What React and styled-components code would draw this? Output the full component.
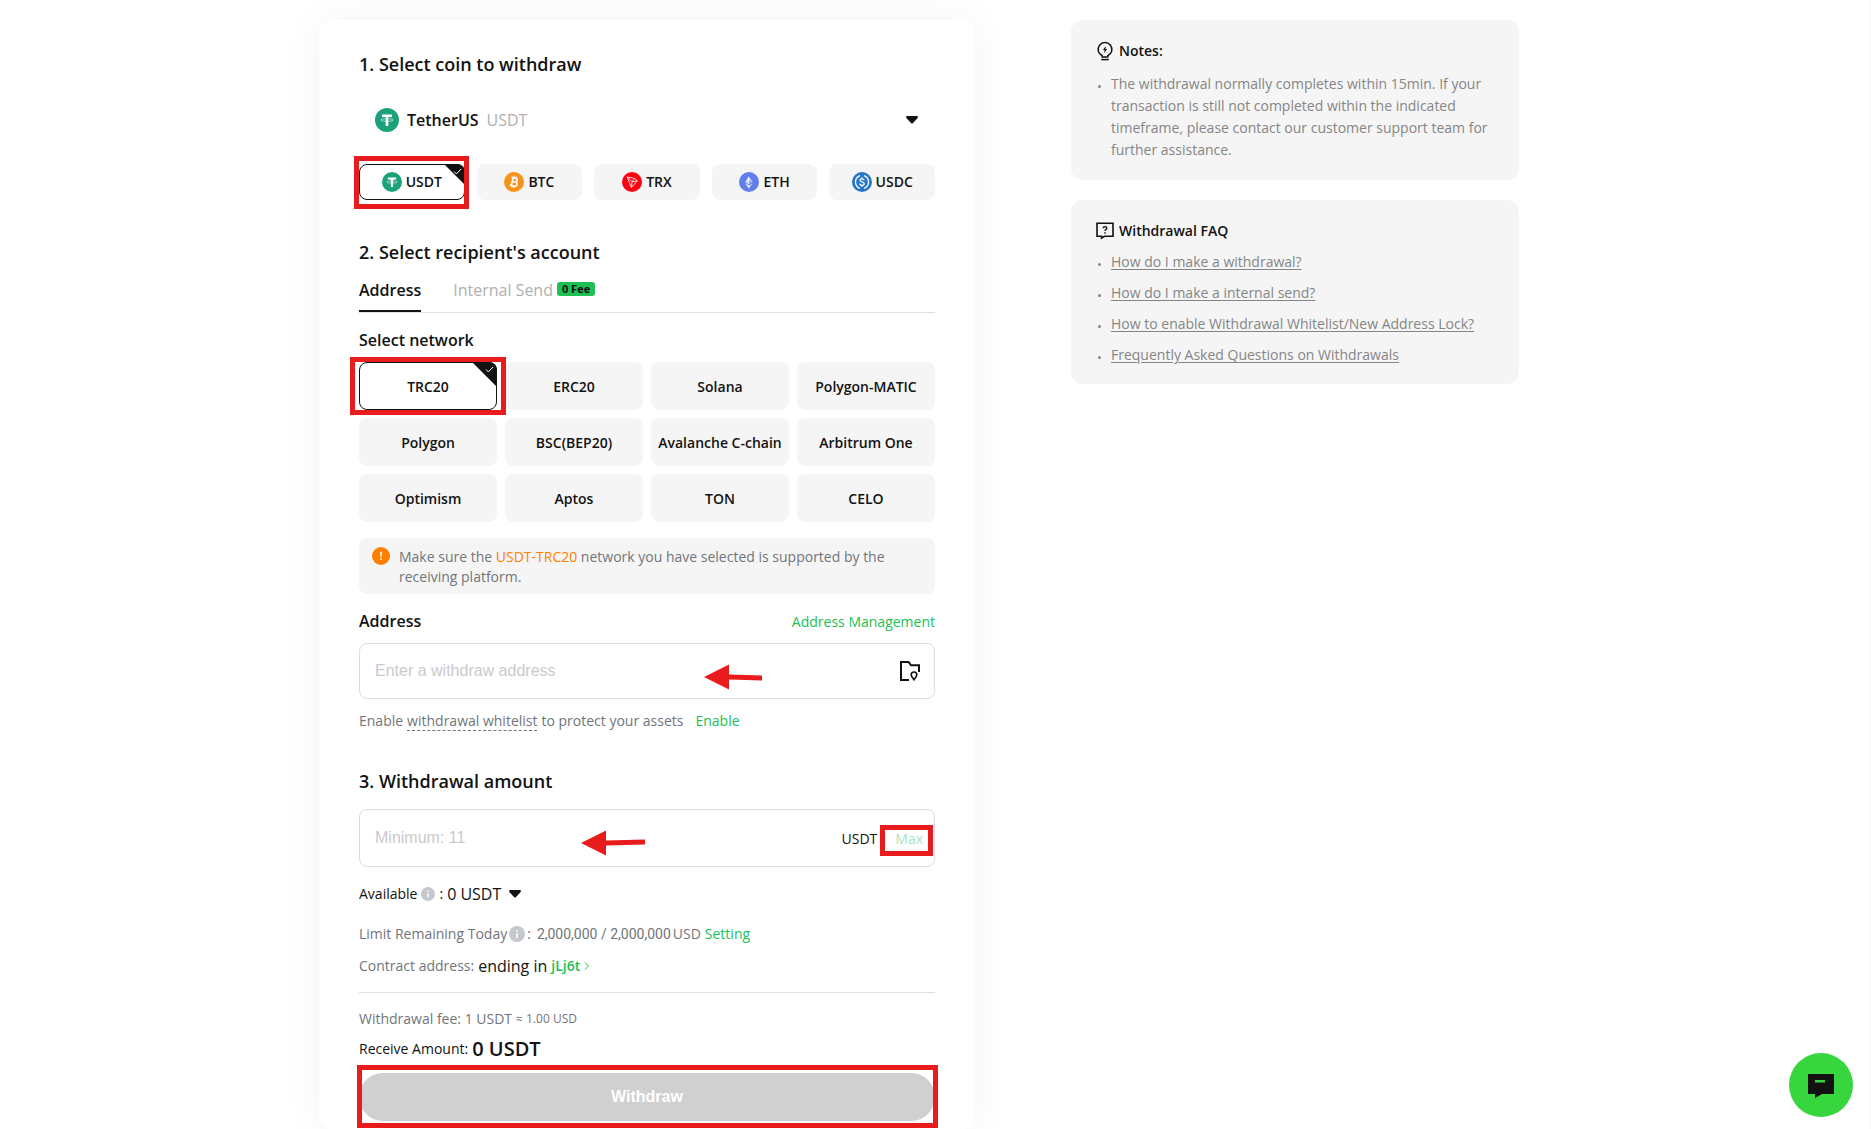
import React, { useState } from 'react';
import styled, { createGlobalStyle } from 'styled-components';

const GlobalStyle = createGlobalStyle`
  * {
    box-sizing: border-box;
  }

  body {
    margin: 0;
    background: #fff;
    color: #121212;
    font-family: "Open Sans", sans-serif;
    font-size: 14px;
  }

  button, input, select {
    font-family: inherit;
    margin: 0;
    padding: 0;
    border: 0;
    background: none;
    color: inherit;
  }

  button {
    cursor: pointer;
  }
`;

const Page = styled.div`
  border-right: 2px solid #fafafa;
  padding: 20px 31px 0 0;
`;

const Layout = styled.main`
  display: flex;
  gap: 96px;
  align-items: flex-start;
  max-width: 1200px;
  margin: 0 auto;
`;

const Card = styled.form`
  flex: 1;
  padding: 32px 40px 8px;
  border-radius: 12px;
  background: #fff;
  box-shadow: 0 0 40px rgba(0, 0, 0, 0.05);
`;

const Sidebar = styled.aside`
  flex: 0 0 448px;
  display: flex;
  flex-direction: column;
  gap: 20px;
`;

const Title = styled.h2`
  margin: ${({ $top }) => $top || 0}px 0 16px;
  font-size: 18px;
  line-height: 24px;
  font-weight: 600;
`;

const SubTitle = styled.div`
  font-size: 16px;
  line-height: 24px;
  font-weight: 600;
`;

const CoinPicker = styled.div`
  display: flex;
  align-items: center;
  height: 56px;
  padding: 0 17px 0 16px;
  gap: 8px;
`;

const CoinSelect = styled.select`
  appearance: none;
  field-sizing: content;
  font-size: 16px;
  line-height: 24px;
  font-weight: 600;
`;

const CoinCode = styled.span`
  flex: 1;
  font-size: 16px;
  line-height: 24px;
  color: #b0b0b0;
`;

const CoinRow = styled.div`
  display: grid;
  grid-template-columns: repeat(5, 1fr);
  gap: 12px;
  margin-top: 16px;
`;

const NetworkGrid = styled.div`
  display: grid;
  grid-template-columns: repeat(4, 1fr);
  gap: 8px;
  margin-top: 10px;
`;

const Option = styled.button`
  position: relative;
  display: flex;
  align-items: center;
  justify-content: center;
  gap: 4px;
  height: ${({ $tall }) => ($tall ? 48 : 36)}px;
  padding-top: ${({ $tall }) => ($tall ? 2 : 0)}px;
  border: 1px solid ${({ $active }) => ($active ? '#121212' : '#f5f5f5')};
  border-radius: 8px;
  background: ${({ $active }) => ($active ? '#fff' : '#f5f5f5')};
  font-size: 14px;
  line-height: 20px;
  font-weight: 600;
  white-space: nowrap;
`;

const Corner = styled.svg`
  position: absolute;
  top: -1px;
  right: -1px;
`;

const Highlight = styled.span`
  position: absolute;
  z-index: 1;
  inset: ${({ $inset }) => $inset};
  border: 5px solid #e81c1c;
  pointer-events: none;
`;

const Tabs = styled.div`
  display: flex;
  gap: 32px;
  height: 45px;
  margin-top: -12px;
  margin-bottom: 15px;
  border-bottom: 1px solid #d8dfe6;
`;

const Tab = styled.button`
  display: flex;
  align-items: center;
  gap: 4px;
  border-top: 2px solid transparent;
  border-bottom: 2px solid ${({ $active }) => ($active ? '#121212' : 'transparent')};
  font-size: 16px;
  font-weight: ${({ $active }) => ($active ? 600 : 400)};
  color: ${({ $active }) => ($active ? '#121212' : '#b0b0b0')};
`;

const Badge = styled.span`
  margin-bottom: 2px;
  padding: 0 5px;
  border-radius: 3px;
  background: #1dc052;
  color: #121212;
  font-size: 11px;
  line-height: 14px;
  font-weight: 700;
`;

const Notice = styled.div`
  display: flex;
  gap: 9px;
  margin: 16px 0 15px;
  padding: 9px 13px 7px;
  border-radius: 8px;
  background: #f5f5f5;
  color: #71757a;
  line-height: 20px;

  svg {
    flex: none;
  }

  p {
    margin: 0;
  }

  b {
    font-weight: 400;
    color: #ff7f00;
  }
`;

const Between = styled.div`
  display: flex;
  justify-content: space-between;
  align-items: center;
`;

const Green = styled.a`
  margin-left: ${({ $left }) => $left || 0}px;
  color: #20bf55;
  text-decoration: none;
  font-weight: ${({ $strong }) => ($strong ? 600 : 400)};
`;

const Field = styled.div`
  position: relative;
  display: flex;
  align-items: center;
  height: ${({ $height }) => $height}px;
  margin-top: ${({ $top }) => $top || 0}px;
  padding: 0 ${({ $end }) => $end}px 0 15px;
  border: 1px solid #dadde8;
  border-radius: 8px;
`;

const FieldInput = styled.input`
  flex: 1;
  min-width: 0;
  height: 32px;
  outline: none;
  font-family: "Liberation Sans", sans-serif;
  font-size: 16px;

  &::placeholder {
    color: #c9cacc;
  }
`;

const IconButton = styled.button`
  display: flex;
  margin-left: ${({ $left }) => $left || 0}px;
`;

const Arrow = styled.svg`
  position: absolute;
  top: 20px;
  right: ${({ $right }) => $right}px;
  pointer-events: none;
`;

const MaxButton = styled.button`
  position: relative;
  margin: 2px 0 0 18px;
  color: #a5e6bb;
  font-size: 14px;
  line-height: 20px;
`;

const Line = styled.div`
  display: flex;
  align-items: center;
  gap: ${({ $gap }) => $gap || 4}px;
  margin-top: ${({ $top }) => $top || 0}px;
  line-height: ${({ $height }) => $height || 24}px;
  color: ${({ $dark }) => ($dark ? '#121212' : '#71757a')};
`;

const Whitelist = styled.span`
  line-height: 18px;
  border-bottom: 1px dashed #71757a;
`;

const Value = styled.span`
  font-size: 16px;
  color: #121212;
`;

const Total = styled.span`
  font-size: 20px;
  font-weight: 600;
`;

const Digits = styled.span`
  margin-left: 4px;
  font-family: Roboto, sans-serif;
`;

const Approx = styled.span`
  font-size: 12px;
`;

const Divider = styled.hr`
  height: 1px;
  margin: 14px 0 16px;
  border: 0;
  background: #d8dfe6;
`;

const Submit = styled.button`
  position: relative;
  display: block;
  width: 100%;
  height: 48px;
  margin-top: 12px;
  border-radius: 24px;
  background: #d0d0d0;
  color: #fff;
  font-family: "Liberation Sans", sans-serif;
  font-size: 16px;
  font-weight: 700;
`;

const Panel = styled.section`
  padding: 19px 24px ${({ $bottom }) => $bottom}px;
  border-radius: 12px;
  background: #f5f5f5;
`;

const PanelTitle = styled.h3`
  display: flex;
  align-items: center;
  gap: 4px;
  margin: 0;
  font-size: 14px;
  line-height: 24px;
  font-weight: 600;
`;

const PanelList = styled.ul`
  margin: ${({ $top }) => $top}px 0 0;
  padding: 0;
  list-style: none;
  line-height: ${({ $line }) => $line}px;
  color: #858585;

  li {
    position: relative;
    padding-left: 16px;
  }

  li::before {
    content: "";
    position: absolute;
    left: 3px;
    top: ${({ $line }) => Math.round($line / 2) + 1}px;
    width: 3px;
    height: 3px;
    border-radius: 50%;
    background: #858585;
  }

  a {
    color: inherit;
    text-underline-offset: 2px;
  }
`;

const ChatButton = styled.button`
  position: fixed;
  right: 18px;
  bottom: 12px;
  display: flex;
  align-items: center;
  justify-content: center;
  width: 64px;
  height: 64px;
  border-radius: 50%;
  background: #37d63f;
`;

const CoinIcon = ({ code, size = 20 }) => (
  <svg width={size} height={size} viewBox="0 0 20 20" aria-hidden="true">
    {code === 'USDT' && (
      <>
        <circle cx="10" cy="10" r="10" fill="#1ba27a" />
        <path d="M5.8 5.4h8.4v2h-3.1V15H8.9V7.4H5.8z" fill="#fff" />
        <ellipse cx="10" cy="10" rx="5.2" ry="1.1" fill="none" stroke="#fff" strokeWidth=".5" />
      </>
    )}
    {code === 'BTC' && (
      <>
        <circle cx="10" cy="10" r="10" fill="#f7931a" />
        <g transform="rotate(13 10 10)" fill="none" stroke="#fff" strokeWidth="1.6">
          <path d="M6.6 6h4.2a1.9 1.9 0 0 1 0 3.8H8.2M10.8 9.8h.6a2.1 2.1 0 0 1 0 4.2H6.6M8.2 6v8" />
          <path d="M8.9 4v2M11.1 4v2M8.9 14v2M11.1 14v2" strokeWidth="1.1" />
        </g>
      </>
    )}
    {code === 'TRX' && (
      <>
        <circle cx="10" cy="10" r="10" fill="#ff0013" />
        <path
          d="M5.2 5l7.3 1.4 2.8 2.5-5.9 6.6zM5.2 5l4.9 4.8-.7 5.7M10.1 9.8l5.2-.9M10.1 9.8l2.4-3.4"
          fill="none" stroke="#fff" strokeWidth=".8" strokeLinejoin="round"
        />
      </>
    )}
    {code === 'ETH' && (
      <>
        <circle cx="10" cy="10" r="10" fill="#627eea" />
        <path d="M10 4.2L6.3 10.3 10 8.7z" fill="#fff" />
        <path d="M10 4.2l3.7 6.1L10 8.7z" fill="#c9d3f8" />
        <path d="M6.3 10.3L10 8.7v3.8z" fill="#dbe2fb" />
        <path d="M13.7 10.3L10 8.7v3.8z" fill="#9aacf2" />
        <path d="M6.3 11.2l3.7 2.2v3z" fill="#fff" />
        <path d="M13.7 11.2L10 13.4v3z" fill="#c9d3f8" />
      </>
    )}
    {code === 'USDC' && (
      <>
        <circle cx="10" cy="10" r="10" fill="#2775ca" />
        <path
          d="M8 3.6a6.8 6.8 0 0 0 0 12.8M12 3.6a6.8 6.8 0 0 1 0 12.8"
          fill="none" stroke="#fff" strokeWidth="1.3"
        />
        <path
          d="M12.1 8.4C12 7.3 11.2 6.8 10 6.8c-1.3 0-2.1.6-2.1 1.5 0 2.2 4.3 1.1 4.3 3.4 0 1-.9 1.6-2.2 1.6s-2.2-.6-2.3-1.7M10 5.3v1.5M10 13.3v1.5"
          fill="none" stroke="#fff" strokeWidth="1.2"
        />
      </>
    )}
  </svg>
);

const SelectedCorner = ({ size }) => (
  <Corner width={size} height={size} viewBox={`0 0 ${size} ${size}`} aria-hidden="true">
    <path d={`M0 0H${size - 8}a8 8 0 0 1 8 8V${size}z`} fill="#121212" />
    <path
      d={`M${size - 11} 7.5l2.4 2.4 4.8-5`}
      fill="none" stroke="#fff" strokeWidth="1"
    />
  </Corner>
);

const Caret = () => (
  <svg width="12" height="8" viewBox="0 0 12 8" aria-hidden="true">
    <path d="M.3 0h11.4v2L6.5 7.5h-1L.3 2z" fill="#121212" />
  </svg>
);

const InfoIcon = ({ size }) => (
  <svg width={size} height={size} viewBox="0 0 16 16" aria-hidden="true">
    <circle cx="8" cy="8" r="8" fill="#c4c7cc" />
    <path d="M7.2 4h1.6v1.6H7.2zM7.2 7h1.6v5H7.2z" fill="#fff" />
  </svg>
);

const WarningIcon = () => (
  <svg width="18" height="18" viewBox="0 0 18 18" aria-hidden="true">
    <circle cx="9" cy="9" r="9" fill="#ff7f00" />
    <path d="M8.1 4.8h1.8l-.3 5.2H8.4zM8.2 11.2h1.6v1.6H8.2z" fill="#fff" />
  </svg>
);

const AddressBookIcon = () => (
  <svg width="20" height="20" viewBox="0 0 20 20" fill="none" stroke="#121212" aria-hidden="true">
    <path d="M9 19H1V1h7.5L11 4.3h8V11" strokeWidth="2" />
    <path d="M14 18.8c-1.4-1.9-2.8-3.4-2.8-5a2.8 2.8 0 0 1 5.6 0c0 1.6-1.4 3.1-2.8 5z" strokeWidth="1.6" />
  </svg>
);

const BulbIcon = () => (
  <svg width="20" height="20" viewBox="0 0 20 20" fill="none" stroke="#121212" aria-hidden="true">
    <path d="M7.2 14.8a6.9 6.9 0 1 1 5.6 0v1.2H7.2z" strokeWidth="1.5" />
    <path d="M6.2 18.6h7.6" strokeWidth="1.5" />
    <path d="M10.8 5L7.9 9h1.7l-.4 3.3L12.1 8h-1.7z" fill="#121212" stroke="none" />
  </svg>
);

const FaqIcon = () => (
  <svg width="20" height="20" viewBox="0 0 20 20" fill="none" stroke="#121212" aria-hidden="true">
    <path d="M2 2.3h16v12.9H9.5L6.5 17v-1.8H2z" strokeWidth="1.6" />
    <path d="M8.2 7.3c0-2.2 3.6-2.2 3.6 0 0 1.3-1.8 1.2-1.8 2.7M10 11.3v1.5" strokeWidth="1.4" />
  </svg>
);

const RedArrow = ({ width, tail, right }) => (
  <Arrow $right={right} width={width} height="26" viewBox={`0 0 ${width} 26`} aria-hidden="true">
    <path d={`M0 13L25 .5v10l${width - 25} ${tail}v5l${25 - width} ${-tail}v10z`} fill="#e81c1c" />
  </Arrow>
);

const coins = ['USDT', 'BTC', 'TRX', 'ETH', 'USDC'];

const networks = [
  'TRC20', 'ERC20', 'Solana', 'Polygon-MATIC',
  'Polygon', 'BSC(BEP20)', 'Avalanche C-chain', 'Arbitrum One',
  'Optimism', 'Aptos', 'TON', 'CELO',
];

const faqs = [
  'How do I make a withdrawal?',
  'How do I make a internal send?',
  'How to enable Withdrawal Whitelist/New Address Lock?',
  'Frequently Asked Questions on Withdrawals',
];

const App = () => {
  const [coin, setCoin] = useState('USDT');
  const [network, setNetwork] = useState('TRC20');

  return (
    <Page>
      <GlobalStyle />
      <Layout>
        <Card onSubmit={(e) => e.preventDefault()}>
          <Title>1. Select coin to withdraw</Title>
          <CoinPicker>
            <CoinIcon code="USDT" size={24} />
            <CoinSelect aria-label="Coin">
              <option>TetherUS</option>
            </CoinSelect>
            <CoinCode>USDT</CoinCode>
            <Caret />
          </CoinPicker>
          <CoinRow>
            {coins.map((code) => (
              <Option key={code} type="button" $active={code === coin} onClick={() => setCoin(code)}>
                <CoinIcon code={code} />
                {code}
                {code === coin && <SelectedCorner size={21} />}
                {code === 'USDT' && <Highlight $inset="-9px -5px -10px -6px" />}
              </Option>
            ))}
          </CoinRow>

          <Title $top={40}>2. Select recipient's account</Title>
          <Tabs>
            <Tab type="button" $active>Address</Tab>
            <Tab type="button">
              Internal Send
              <Badge>0 Fee</Badge>
            </Tab>
          </Tabs>

          <SubTitle>Select network</SubTitle>
          <NetworkGrid>
            {networks.map((name) => (
              <Option key={name} type="button" $tall $active={name === network} onClick={() => setNetwork(name)}>
                {name}
                {name === network && <SelectedCorner size={25} />}
                {name === 'TRC20' && <Highlight $inset="-6px -10px -6px -10px" />}
              </Option>
            ))}
          </NetworkGrid>

          <Notice>
            <WarningIcon />
            <p>
              Make sure the <b>USDT-TRC20</b> network you have selected is supported by the
              receiving platform.
            </p>
          </Notice>

          <Between>
            <SubTitle as="label" htmlFor="address">Address</SubTitle>
            <Green href="#">Address Management</Green>
          </Between>
          <Field $height={56} $top={10} $end={14}>
            <FieldInput id="address" placeholder="Enter a withdraw address" />
            <IconButton type="button" aria-label="Address book">
              <AddressBookIcon />
            </IconButton>
            <RedArrow width={58} tail={1} right={172} />
          </Field>
          <Line $top={12} $height={20}>
            <span>Enable</span>
            <Whitelist>withdrawal whitelist</Whitelist>
            <span>to protect your assets</span>
            <Green href="#" $left={8}>Enable</Green>
          </Line>

          <Title $top={38}>
            <label htmlFor="amount">3. Withdrawal amount</label>
          </Title>
          <Field $height={58} $end={11}>
            <FieldInput id="amount" placeholder="Minimum: 11" />
            <span>USDT</span>
            <MaxButton type="button">
              Max
              <Highlight $inset="-4px -10px -7px -15px" />
            </MaxButton>
            <RedArrow width={64} tail={-1} right={289} />
          </Field>

          <Line $top={15} $dark>
            Available
            <InfoIcon size={14} />
            <span>:</span>
            <Value>0 USDT</Value>
            <IconButton type="button" aria-label="Show balances" $left={4}>
              <Caret />
            </IconButton>
          </Line>
          <Line $top={16} $gap={2}>
            Limit Remaining Today
            <InfoIcon size={16} />
            <span>:</span>
            <Digits>2,000,000 / 2,000,000</Digits>
            <span>USD</span>
            <Green href="#" $left={2}>Setting</Green>
          </Line>
          <Line $top={8}>
            Contract address:
            <Value>ending in</Value>
            <Green href="#" $strong>jLj6t</Green>
            <svg width="6" height="8" viewBox="0 0 6 8" fill="none" stroke="#20bf55" aria-hidden="true">
              <path d="M1 .5L4.5 4 1 7.5" />
            </svg>
          </Line>
          <Divider />
          <Line $height={20}>
            Withdrawal fee: 1 USDT
            <Approx>≈ 1.00 USD</Approx>
          </Line>
          <Line $top={8} $dark>
            Receive Amount:
            <Total>0 USDT</Total>
          </Line>
          <Submit type="submit">
            Withdraw
            <Highlight $inset="-8px -3px -7px -2px" />
          </Submit>
        </Card>

        <Sidebar>
          <Panel $bottom={19}>
            <PanelTitle>
              <BulbIcon />
              Notes:
            </PanelTitle>
            <PanelList $top={10} $line={22}>
              <li>
                The withdrawal normally completes within 15min. If your transaction is still not
                completed within the indicated timeframe, please contact our customer support team for
                further assistance.
              </li>
            </PanelList>
          </Panel>
          <Panel $bottom={14}>
            <PanelTitle>
              <FaqIcon />
              Withdrawal FAQ
            </PanelTitle>
            <PanelList $top={3} $line={31}>
              {faqs.map((question) => (
                <li key={question}>
                  <a href="#">{question}</a>
                </li>
              ))}
            </PanelList>
          </Panel>
        </Sidebar>
      </Layout>

      <ChatButton type="button" aria-label="Open chat">
        <svg width="26" height="26" viewBox="0 0 26 26" aria-hidden="true">
          <path d="M0 2h26v20H14l-7 4v-4H0z" fill="#121212" />
          <path d="M7 8h10v2.5H7z" fill="#37d63f" />
        </svg>
      </ChatButton>
    </Page>
  );
};

export default App;
